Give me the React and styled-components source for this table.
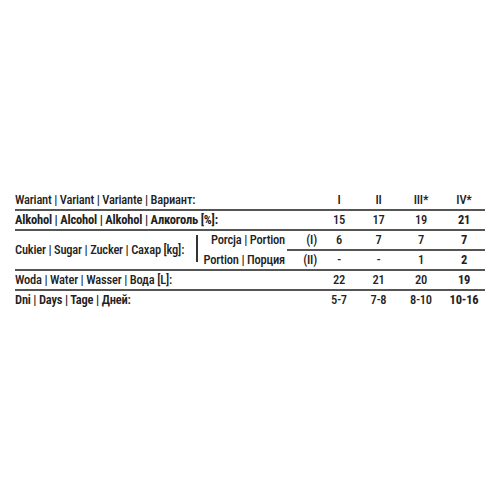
import React from "react";
import styled, { createGlobalStyle } from "styled-components";

const Global = createGlobalStyle`
  html, body { margin: 0; padding: 0; background: #ffffff; }
  body { font-family: "Roboto Condensed", "Roboto", sans-serif; color: #222222; }
`;

const Page = styled.main`
  padding: 191px 15px 0 15px;
`;

const Table = styled.div`
  display: grid;
  width: 470px;
  grid-template-columns: 272px 33px 38px 41px 44px 42px;
  font-size: 12.5px;
  line-height: 18px;
  font-weight: 500;
  letter-spacing: -0.2px;
  white-space: nowrap;
`;

const Cell = styled.div`
  height: ${(p) => (p.$tall ? "38px" : "18px")};
  border-bottom: ${(p) => (p.$noLine ? "none" : "2px solid #555555")};
  padding-bottom: ${(p) => (p.$noLine ? "2px" : "0")};
  text-align: ${(p) => p.$align || "center"};
  font-weight: ${(p) => p.$weight || "inherit"};
  grid-column: ${(p) => p.$span || "auto"};
  grid-row: ${(p) => p.$rows || "auto"};
`;

const Label = styled(Cell)`
  text-align: left;
`;

const Marker = styled(Cell)`
  text-align: right;
  padding-right: 3px;
`;

const SugarCell = styled.div`
  grid-column: 1 / 2;
  grid-row: span 2;
  display: flex;
  align-items: center;
  height: 38px;
  border-bottom: 2px solid #555555;
`;

const SugarMain = styled.span`
  width: 181px;
  flex: none;
`;

const Bar = styled.span`
  width: 2px;
  height: 27px;
  margin-top: -3px;
  background: #333333;
  flex: none;
`;

const SubLabels = styled.div`
  flex: 1;
  display: flex;
  flex-direction: column;
  gap: 2px;
  align-self: stretch;
  text-align: right;
  padding-right: 2px;
`;

const SubLabel = styled.span`
  display: block;
  height: 18px;
`;

function Values({ values, boldLast = true, noLine }) {
  return values.map((v, i) => (
    <Cell key={i} $weight={boldLast && i === values.length - 1 ? 700 : undefined} $noLine={noLine}>
      {v}
    </Cell>
  ));
}

export default function App() {
  return (
    <>
      <Global />
      <Page>
        <Table>
          <Label $span="1 / 3">Wariant | Variant | Variante | Вариант:</Label>
          <Values values={["I", "II", "III*", "IV*"]} boldLast={false} />

          <Label $span="1 / 3" $weight={700}>Alkohol | Alcohol | Alkohol | Алкоголь [%]:</Label>
          <Values values={["15", "17", "19", "21"]} />

          <SugarCell>
            <SugarMain>Cukier | Sugar | Zucker | Сахар [kg]:</SugarMain>
            <Bar />
            <SubLabels>
              <SubLabel>Porcja | Portion</SubLabel>
              <SubLabel>Portion | Порция</SubLabel>
            </SubLabels>
          </SugarCell>
          <Marker>(I)</Marker>
          <Values values={["6", "7", "7", "7"]} />
          <Marker>(II)</Marker>
          <Values values={["-", "-", "1", "2"]} />

          <Label $span="1 / 3">Woda | Water | Wasser | Вода [L]:</Label>
          <Values values={["22", "21", "20", "19"]} />

          <Label $span="1 / 3" $noLine $weight={600}>Dni | Days | Tage | Дней:</Label>
          <Values values={["5-7", "7-8", "8-10", "10-16"]} noLine />
        </Table>
      </Page>
    </>
  );
}
